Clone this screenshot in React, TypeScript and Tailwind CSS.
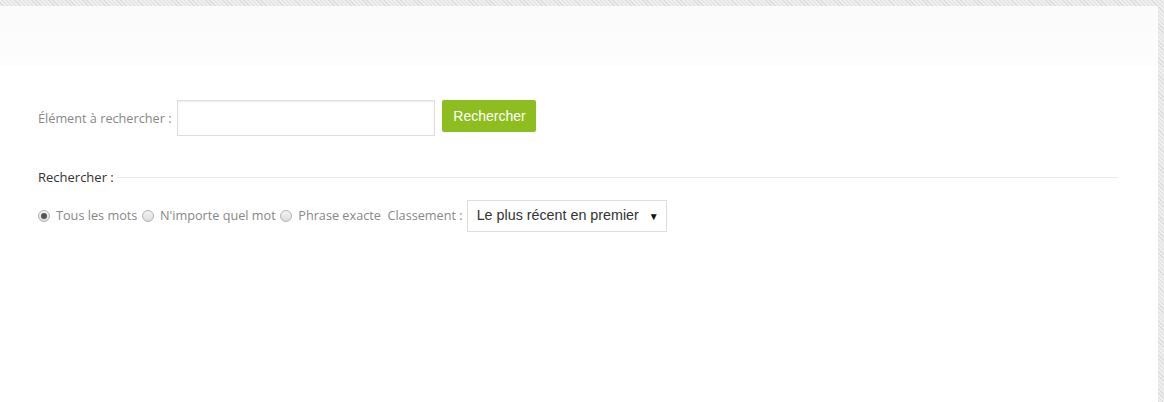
import React from 'react';

const radios = [
  { label: 'Tous les mots', checked: true },
  { label: "N'importe quel mot", checked: false },
  { label: 'Phrase exacte', checked: false },
];

export default function App() {
  return (
    <div className="h-[402px] w-[1164px] bg-[#e4e4e4] bg-[repeating-linear-gradient(45deg,#dedede_0px,#dedede_1px,#eeeeee_1px,#eeeeee_3px)] pt-[6px] pr-[6px] overflow-hidden">
      <div className="h-full bg-white font-['Open_Sans',sans-serif]">
        <div className="h-[60px] bg-gradient-to-b from-[#fbfbfb] to-[#fdfdfd]" />

        <div className="pl-[38px] pr-[40px]">
          <div className="mt-[34px] flex items-start">
            <label className="mt-[9px] text-[12.7px] text-[#888] mr-[6px]">Élément à rechercher :</label>
            <input
              type="text"
              className="h-[36px] w-[258px] border border-[#dedede] shadow-[inset_0_1px_2px_rgba(0,0,0,0.08)] outline-none px-2"
            />
            <button className="ml-[7px] h-[32px] w-[94px] rounded-[2px] bg-[#8ebd1f] text-white text-[14px] font-['Liberation_Sans',Arial,sans-serif]">
              Rechercher
            </button>
          </div>

          <div className="mt-[35px] flex items-center">
            <span className="text-[13px] text-[#333] leading-none">Rechercher :</span>
            <div className="ml-[3px] h-px flex-1 bg-[#e8e8e8]" />
          </div>

          <div className="mt-[16px] flex items-center text-[12.7px] text-[#888]">
            {radios.map((r) => (
              <label key={r.label} className="flex items-center mr-[4.5px]">
                <span className="flex h-[12px] w-[12px] items-center justify-center rounded-full border border-[#b5b5b5] bg-gradient-to-b from-[#f4f4f4] to-[#dcdcdc]">
                  {r.checked && <span className="h-[6px] w-[6px] rounded-full bg-[#555]" />}
                </span>
                <span className="ml-[6px]">{r.label}</span>
              </label>
            ))}
            <span className="ml-[2px] mr-[4px]">Classement :</span>
            <div className="flex h-[32px] w-[200px] items-center justify-between border border-[#dedede] bg-white pl-[9px] pr-[7px] font-['Liberation_Sans',Arial,sans-serif] text-[14.3px] text-[#333]">
              <span>Le plus récent en premier</span>
              <span className="text-[10px] text-[#111]">▼</span>
            </div>
          </div>
        </div>
      </div>
    </div>
  );
}
